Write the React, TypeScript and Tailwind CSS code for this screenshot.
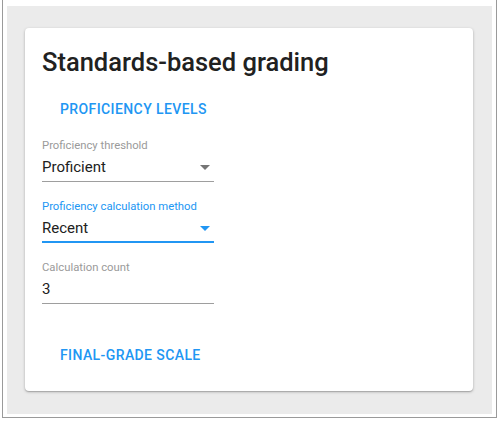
const Arrow = ({ color }: { color: string }) => (
  <svg width="10" height="5" viewBox="0 0 10 5" className="shrink-0">
    <path d="M0 0 L10 0 L5 5 Z" fill={color} />
  </svg>
);

type FieldProps = {
  label: string;
  value: string;
  select?: boolean;
  focused?: boolean;
};

const Field = ({ label, value, select, focused }: FieldProps) => (
  <div className="w-[172px] h-[61px]">
    <div
      className={
        "text-[11.3px] leading-[13px] " +
        (focused ? "text-[#2196f3]" : "text-[#9a9a9a]")
      }
    >
      {label}
    </div>
    <div
      className={
        "flex items-center justify-between pt-[5px] leading-[20px] text-[15px] text-[#212121] " +
        (focused
          ? "pb-[3px] border-b-2 border-[#2196f3]"
          : "pb-[4px] border-b border-[#9e9e9e]")
      }
    >
      <span>{value}</span>
      {select && (
        <span className="mr-[4px]">
          <Arrow color={focused ? "#2196f3" : "#757575"} />
        </span>
      )}
    </div>
  </div>
);

export default function App() {
  return (
    <div
      className="w-[499px] h-[421px] bg-white"
      style={{ fontFamily: "Roboto, 'Liberation Sans', sans-serif" }}
    >
      <div className="ml-[2px] w-[495px] h-[418px] border-l border-r border-b border-[#9a9a9a] pl-[4px] pr-[4px] pt-[6px] pb-[3px]">
        <div className="w-full h-full bg-[#ebebeb] pl-[18px] pr-[19px] pt-[22px]">
          <div className="bg-white rounded-[4px] h-[363px] shadow-[0_1px_3px_rgba(0,0,0,0.25),0_1px_1px_rgba(0,0,0,0.14)] pl-[17px] pt-[18px]">
            <h1 className="text-[25.5px] leading-[32px] font-medium text-[#212121]">
              Standards-based grading
            </h1>
            <div className="mt-[21px] ml-[18px] text-[14px] leading-[20px] font-medium tracking-[0.4px] text-[#2196f3]">
              PROFICIENCY LEVELS
            </div>
            <div className="mt-[20px] flex flex-col">
              <Field label="Proficiency threshold" value="Proficient" select />
              <Field
                label="Proficiency calculation method"
                value="Recent"
                select
                focused
              />
              <Field label="Calculation count" value="3" />
            </div>
            <div className="mt-[23px] ml-[18px] text-[14px] leading-[20px] font-medium tracking-[0.4px] text-[#2196f3]">
              FINAL-GRADE SCALE
            </div>
          </div>
        </div>
      </div>
    </div>
  );
}
